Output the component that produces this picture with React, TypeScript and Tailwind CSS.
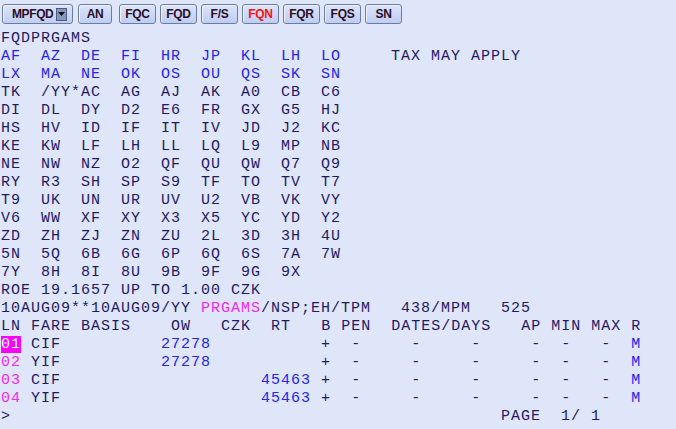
import React from "react";

const N = "#1e1a66";
const B = "#2424f0";
const M = "#f028f0";

type Part = [number, string, string?, boolean?];

function Line({ parts }: { parts: Part[] }) {
  const out: React.ReactNode[] = [];
  let pos = 0;
  parts.forEach(([col, text, color, hl], i) => {
    if (col > pos) {
      out.push(<span key={"s" + i}>{" ".repeat(col - pos)}</span>);
      pos = col;
    }
    out.push(
      <span
        key={"t" + i}
        style={{ color: hl ? "#ffffff" : color || N }}
        className={hl ? "bg-[#ff00ff]" : ""}
      >
        {text}
      </span>
    );
    pos += text.length;
  });
  if (out.length === 0) out.push(<span key="e"> </span>);
  return <div className="h-[18px] whitespace-pre">{out}</div>;
}

const gridRows = [
  "TK  /YY*AC  AG  AJ  AK  A0  CB  C6",
  "DI  DL  DY  D2  E6  FR  GX  G5  HJ",
  "HS  HV  ID  IF  IT  IV  JD  J2  KC",
  "KE  KW  LF  LH  LL  LQ  L9  MP  NB",
  "NE  NW  NZ  O2  QF  QU  QW  Q7  Q9",
  "RY  R3  SH  SP  S9  TF  TO  TV  T7",
  "T9  UK  UN  UR  UV  U2  VB  VK  VY",
  "V6  WW  XF  XY  X3  X5  YC  YD  Y2",
  "ZD  ZH  ZJ  ZN  ZU  2L  3D  3H  4U",
  "5N  5Q  6B  6G  6P  6Q  6S  7A  7W",
  "7Y  8H  8I  8U  9B  9F  9G  9X",
];

const dashes: Part[] = [
  [35, "-"],
  [41, "-"],
  [47, "-"],
  [53, "-"],
  [56, "-"],
  [60, "-"],
  [63, "M", B],
];

function Btn({
  label,
  w,
  ml,
  red,
}: {
  label: string;
  w: string;
  ml: string;
  red?: boolean;
}) {
  return (
    <div
      className={`${w} ${ml} h-[20px] flex items-center justify-center rounded-[3px] border border-[#6b7ca3] bg-gradient-to-b from-[#dbe4fb] to-[#bfcdf2] shadow-[inset_1px_1px_0_#f0f4ff] text-[12px] font-bold tracking-[-0.3px] ${
        red ? "text-[#ff1010]" : "text-[#2a0c24]"
      }`}
      style={{ fontFamily: '"Liberation Sans", Arial, sans-serif' }}
    >
      {label}
    </div>
  );
}

export default function App() {
  return (
    <div className="w-[676px] h-[429px] bg-[#e0e6f9] overflow-hidden">
      <div className="flex items-start pt-[4px] pl-[2px] h-[30px]">
        <div
          className="w-[71px] h-[20px] flex items-center rounded-[3px] border border-[#6b7ca3] bg-gradient-to-b from-[#dbe4fb] to-[#bfcdf2] shadow-[inset_1px_1px_0_#f0f4ff] text-[12px] font-bold tracking-[-0.4px] text-[#2a0c24] pl-[9px]"
          style={{ fontFamily: '"Liberation Sans", Arial, sans-serif' }}
        >
          <span>MPFQD</span>
          <div className="ml-[3px] w-[11px] h-[13px] bg-[#8797bb] border border-[#4d5d80] flex items-center justify-center">
            <svg width="7" height="4" viewBox="0 0 7 4">
              <path d="M0 0 H7 L3.5 4 Z" fill="#111" />
            </svg>
          </div>
        </div>
        <Btn label="AN" w="w-[34px]" ml="ml-[5px]" />
        <Btn label="FQC" w="w-[37px]" ml="ml-[7px]" />
        <Btn label="FQD" w="w-[37px]" ml="ml-[4px]" />
        <Btn label="F/S" w="w-[37px]" ml="ml-[4px]" />
        <Btn label="FQN" w="w-[37px]" ml="ml-[4px]" red />
        <Btn label="FQR" w="w-[37px]" ml="ml-[4px]" />
        <Btn label="FQS" w="w-[37px]" ml="ml-[4px]" />
        <Btn label="SN" w="w-[37px]" ml="ml-[4px]" />
      </div>
      <div
        className="pl-[1px] text-[15px] tracking-[1px] leading-[18px]"
        style={{ fontFamily: '"Liberation Mono", "Courier New", monospace', color: N }}
      >
        <Line parts={[[0, "FQDPRGAMS"]]} />
        <Line
          parts={[
            [0, "AF  AZ  DE  FI  HR  JP  KL  LH  LO", B],
            [39, "TAX MAY APPLY"],
          ]}
        />
        <Line parts={[[0, "LX  MA  NE  OK  OS  OU  QS  SK  SN", B]]} />
        {gridRows.map((r, i) => (
          <Line key={i} parts={[[0, r]]} />
        ))}
        <Line parts={[[0, "ROE 19.1657 UP TO 1.00 CZK"]]} />
        <Line
          parts={[
            [0, "10AUG09**10AUG09/YY "],
            [20, "PRGAMS", M],
            [26, "/NSP;EH/TPM   438/MPM   525"],
          ]}
        />
        <Line
          parts={[
            [0, "LN FARE BASIS"],
            [17, "OW"],
            [22, "CZK"],
            [27, "RT"],
            [32, "B"],
            [34, "PEN"],
            [39, "DATES/DAYS"],
            [52, "AP"],
            [55, "MIN"],
            [59, "MAX"],
            [63, "R"],
          ]}
        />
        <Line
          parts={[[0, "01", N, true], [3, "CIF"], [16, "27278", B], [32, "+"], ...dashes]}
        />
        <Line parts={[[0, "02", M], [3, "YIF"], [16, "27278", B], [32, "+"], ...dashes]} />
        <Line parts={[[0, "03", M], [3, "CIF"], [26, "45463", B], [32, "+"], ...dashes]} />
        <Line parts={[[0, "04", M], [3, "YIF"], [26, "45463", B], [32, "+"], ...dashes]} />
        <Line parts={[[0, ">"], [50, "PAGE  1/ 1"]]} />
      </div>
    </div>
  );
}
